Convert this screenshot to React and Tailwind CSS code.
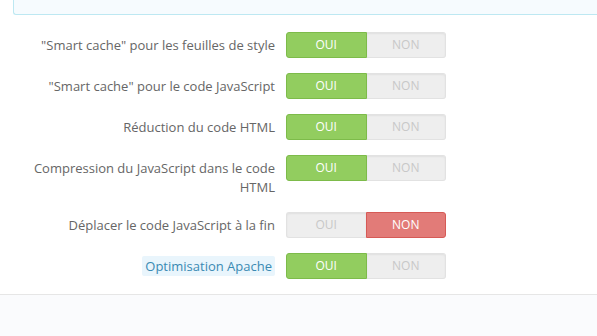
const rows = [
  { label: '"Smart cache" pour les feuilles de style', on: true },
  { label: '"Smart cache" pour le code JavaScript', on: true },
  { label: "Réduction du code HTML", on: true },
  { label: "Compression du JavaScript dans le code HTML", on: true },
  { label: "Déplacer le code JavaScript à la fin", on: false },
  { label: "Optimisation Apache", on: true, hint: true },
];

function Toggle({ on }) {
  return (
    <div className="flex w-[160px] h-[26px] text-[12px] leading-none">
      {on ? (
        <>
          <span className="flex-1 flex items-center justify-center rounded-l-[3px] bg-[#92cd5f] border border-[#7dbb4a] text-white">
            OUI
          </span>
          <span className="flex-1 flex items-center justify-center rounded-r-[3px] bg-[#eeeeee] border border-[#e2e2e2] border-l-0 text-[#c8c8c8] shadow-[inset_0_1px_2px_rgba(0,0,0,0.06)]">
            NON
          </span>
        </>
      ) : (
        <>
          <span className="flex-1 flex items-center justify-center rounded-l-[3px] bg-[#eeeeee] border border-[#e2e2e2] border-r-0 text-[#c8c8c8] shadow-[inset_0_1px_2px_rgba(0,0,0,0.06)]">
            OUI
          </span>
          <span className="flex-1 flex items-center justify-center rounded-r-[3px] bg-[#e27b78] border border-[#d65a56] text-white">
            NON
          </span>
        </>
      )}
    </div>
  );
}

export default function App() {
  return (
    <div className="w-[597px] h-[336px] bg-white overflow-hidden flex flex-col font-['Open_Sans',sans-serif] text-[13px] text-[#666]">
      <div className="ml-[13px] h-[15px] bg-[#f6fbfe] border-l border-b border-[#bde8f2] rounded-bl-[3px]" />
      <div className="pt-[17px]">
        {rows.map((r) => (
          <div key={r.label} className="flex items-start mb-[15px]">
            <div className="ml-[30px] w-[245px] text-right leading-[19px] pt-[4px]">
              {r.hint ? (
                <span className="bg-[#e9f5fc] text-[#3a8ab3] px-[3px] py-[1px] rounded-[2px]">
                  {r.label}
                </span>
              ) : (
                r.label
              )}
            </div>
            <div className="ml-[11px]">
              <Toggle on={r.on} />
            </div>
          </div>
        ))}
      </div>
      <div className="flex-1 border-t border-[#e6e6e6] bg-[#fafbfd]" />
    </div>
  );
}
